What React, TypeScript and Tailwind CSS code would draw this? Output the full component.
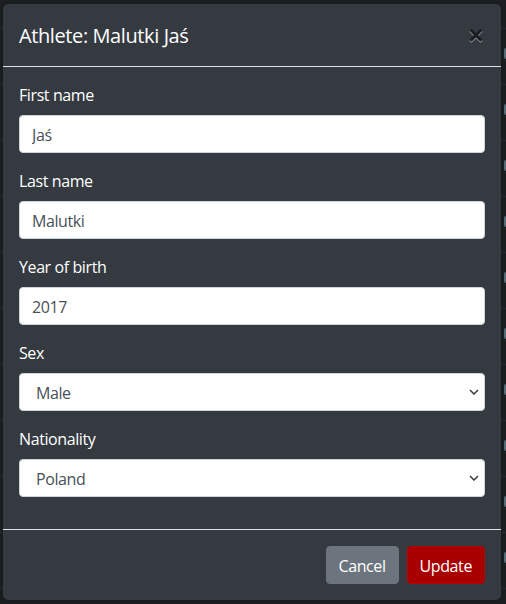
import { ChangeEvent, useState } from 'react';

const font = "font-['Segoe_UI','Open_Sans','Noto_Sans',sans-serif] tracking-[-0.025em]";

// rows of the athletes table that sit behind the modal backdrop
const rowTops = [28, 84, 140, 196, 252, 308, 364, 420, 476, 532, 588];

function Chevron() {
  return (
    <svg width="10" height="6" viewBox="0 0 10 6" className="pointer-events-none">
      <polyline points="1,1 5,5 9,1" fill="none" stroke="#343a40" strokeWidth="1.5" />
    </svg>
  );
}

function Field({ label, value }: { label: string; value: string }) {
  const [val, setVal] = useState(value);
  return (
    <div className="mb-4">
      <label className="mb-2 block pt-px text-base leading-[23px] text-white">{label}</label>
      <input
        value={val}
        onChange={(e: ChangeEvent<HTMLInputElement>) => setVal(e.target.value)}
        className="block h-[38px] w-full rounded-[4px] border border-[#ced4da] bg-white px-3 pt-px text-base text-[#495057] outline-none"
      />
    </div>
  );
}

function SelectField({ label, value, options }: { label: string; value: string; options: string[] }) {
  const [val, setVal] = useState(value);
  return (
    <div className="mb-4">
      <label className="mb-2 block pt-px text-base leading-[23px] text-white">{label}</label>
      <div className="relative">
        <select
          value={val}
          onChange={(e) => setVal(e.target.value)}
          className="block h-[38px] w-full appearance-none rounded-[4px] border border-[#ced4da] bg-white pl-4 pr-8 pt-px text-base text-[#495057] outline-none"
        >
          {options.map((o) => (
            <option key={o}>{o}</option>
          ))}
        </select>
        <div className="pointer-events-none absolute right-[6px] top-0 flex h-full items-center">
          <Chevron />
        </div>
      </div>
    </div>
  );
}

export default function App() {
  return (
    <div className={`relative h-[604px] w-[506px] overflow-hidden bg-[#1b1e21] ${font}`}>
      {/* table behind the backdrop */}
      <div className="absolute inset-0">
        <div className="absolute left-[113px] top-[-19px] text-base text-[#7d8287]">liona</div>
        <div className="absolute left-[403px] top-[-19px] text-base text-[#7d8287]">2011</div>
        {rowTops.map((t) => (
          <div key={t} className="absolute left-0 h-px w-full bg-[#2a2e33]" style={{ top: t }} />
        ))}
        {rowTops.slice(0, 10).map((t) => (
          <div
            key={'b' + t}
            className="absolute left-[504px] h-[11px] w-[6px] rounded-l-[2px] bg-[#566b7a]"
            style={{ top: t + 20 }}
          />
        ))}
      </div>

      {/* modal */}
      <div className="relative ml-[3px] mt-[4px] w-[498px] rounded-[5px] bg-[#343a40] shadow-[0_0_2px_rgba(0,0,0,0.4)]">
        <div className="flex items-center justify-between border-b border-[#dee2e6] px-4 py-4">
          <h5 className="pt-px text-xl leading-[29px] text-white">Athlete: Malutki Jaś</h5>
          <button
            type="button"
            className="mr-[2px] font-['Liberation_Sans',sans-serif] text-[26px] font-bold leading-none text-black opacity-50 [text-shadow:0_1px_0_#fff]"
          >
            ×
          </button>
        </div>

        <div className="px-4 pt-4 pb-4">
          <Field label="First name" value="Jaś" />
          <Field label="Last name" value="Malutki" />
          <Field label="Year of birth" value="2017" />
          <SelectField label="Sex" value="Male" options={['Male', 'Female']} />
          <SelectField label="Nationality" value="Poland" options={['Poland', 'Germany', 'Czech Republic']} />
        </div>

        <div className="flex items-center justify-end gap-2 border-t border-[#dee2e6] px-4 pt-4 pb-4">
          <button
            type="button"
            className="h-[38px] rounded-[4px] border border-[#6c757d] bg-[#6c757d] px-3 pt-px text-base text-white"
          >
            Cancel
          </button>
          <button
            type="button"
            className="h-[38px] rounded-[4px] border border-[#b80000] bg-[#a80000] px-3 pt-px text-base text-white"
          >
            Update
          </button>
        </div>
      </div>
    </div>
  );
}
